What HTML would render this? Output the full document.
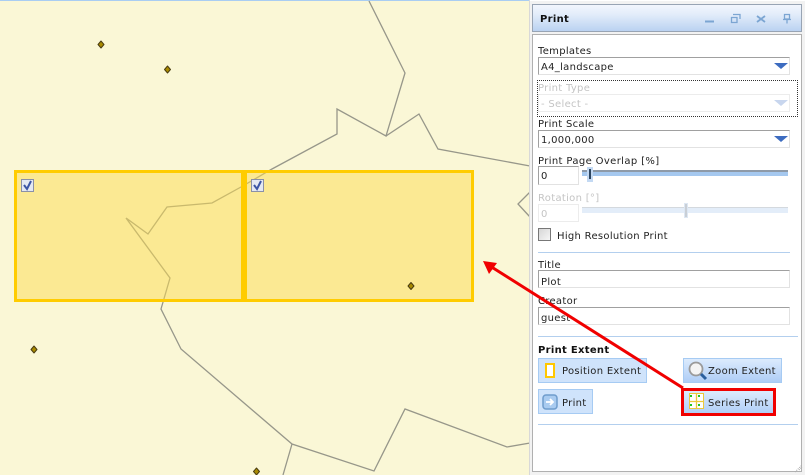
<!DOCTYPE html>
<html><head><meta charset="utf-8"><style>
html,body{margin:0;padding:0}
body{width:805px;height:475px;overflow:hidden;position:relative;background:#faf7d6;font-family:"DejaVu Sans",sans-serif;font-size:10px;color:#222}
div,span,svg{position:absolute;box-sizing:border-box}
.t{white-space:nowrap;line-height:12px;letter-spacing:.3px;margin-top:1px}
.dis{color:#c4c4c4}
.f{background:#fff;border:1px solid #e2e2e2;border-top-color:#a0a0a0;border-left-color:#a0a0a0;height:18px;padding-left:2px;line-height:20px;white-space:nowrap;letter-spacing:.3px}
.fd{border-color:#ececec;color:#c4c4c4}
.hr{height:1px;background:#b3cfee}
.b{border:1px solid #a6cbf3;background:#cfe3fb;height:25px}
.g{background:linear-gradient(#dcebfd,#aecdf6)}
</style></head><body>
<svg width="805" height="475" style="left:0;top:0">
<rect x="0" y="0" width="805" height="1" fill="#a9cdf2"/>
<g fill="none" stroke="#97978a" stroke-width="1.300">
<path d="M369 1L405 73L386 136L337 109L337 134L272 169L241 187L212 203L167 207L148 234L126 218L170 278L161 309L181 349L292 444L374 471L405 409L507 447L530 443"/>
<path d="M386 136L419 114L438 149L530 166"/>
<path d="M292 444L283 475"/>
<path d="M530 192L518 204L530 217"/>
</g>
<g fill="#fbdc50" fill-opacity=".5" stroke="none"><rect x="14" y="170" width="460" height="132"/></g>
<g fill="none" stroke="#ffcc00" stroke-width="3">
<rect x="15.500" y="171.500" width="457" height="129"/>
</g>
<rect x="241" y="170" width="6" height="132" fill="#ffcc00"/>
<g fill="#a88a00" stroke="#4a3c10" stroke-width="1" stroke-linejoin="round">
<path d="M101 41L104 44.500L101 48L98 44.500Z"/>
<path d="M167.500 66L170.500 69.500L167.500 73L164.500 69.500Z"/>
<path d="M34 346L37 349.500L34 353L31 349.500Z"/>
<path d="M256.500 468L259.500 471.500L256.500 475L253.500 471.500Z"/>
<path d="M411 282.500L414 286L411 289.500L408 286Z"/>
</g>
<g>
<rect x="21.500" y="179.500" width="12" height="12" fill="#e4e8f2" stroke="#8a90a8"/>
<path d="M24 185L27 189L31 181" fill="none" stroke="#3c55a5" stroke-width="2"/>
<rect x="251.500" y="179.500" width="12" height="12" fill="#e4e8f2" stroke="#8a90a8"/>
<path d="M254 185L257 189L261 181" fill="none" stroke="#3c55a5" stroke-width="2"/>
</g>
</svg>

<div style="left:529px;top:0;width:276px;height:475px;background:#fff;border-left:1px solid #d8d8d8"></div>
<div style="left:530px;top:1px;width:275px;height:474px;background:#f2f2f2"></div>
<div style="left:532px;top:4px;width:270px;height:28px;border:1px solid #98a4b4;background:linear-gradient(#f2f6fd,#e3edfa 35%,#bad2f1)"></div>
<div class="t" style="left:540px;top:13px;font-weight:bold;color:#111">Print</div>
<svg width="100" height="20" style="left:700px;top:9px">
<g fill="none" stroke="#7ba5d2">
<path d="M5 12.500H14" stroke-width="2"/>
<path d="M33 5.500H40V10M31.500 8.500H37V13.500H31.500Z" stroke-width="1.300"/>
<path d="M57 7L65 13M65 7L57 13" stroke-width="1.800"/>
<path d="M84.500 5.500H89.500V10H84.500ZM83 10.500H91M87 11V14.500" stroke-width="1.300"/>
</g></svg>
<div style="left:532px;top:34px;width:270px;height:438px;background:#fff;border:1px solid #b0b0b0"></div>

<div class="t" style="left:538px;top:45px">Templates</div>
<div class="f" style="left:538px;top:57px;width:252px">A4_landscape</div>
<svg width="16" height="8" style="left:773px;top:62px"><path d="M1 1H15L8 7Z" fill="#3d6cc0"/></svg>

<div style="left:537px;top:80px;width:261px;height:37px;border:1px dotted #333"></div>
<div class="t dis" style="left:538px;top:82px">Print Type</div>
<div class="f fd" style="left:538px;top:94px;width:252px">- Select -</div>
<svg width="16" height="8" style="left:773px;top:99px"><path d="M1 1H15L8 7Z" fill="#c8d6ee"/></svg>

<div class="t" style="left:538px;top:118px">Print Scale</div>
<div class="f" style="left:538px;top:130px;width:252px">1,000,000</div>
<svg width="16" height="8" style="left:773px;top:135px"><path d="M1 1H15L8 7Z" fill="#3d6cc0"/></svg>

<div class="t" style="left:538px;top:155px;letter-spacing:.37px">Print Page Overlap [%]</div>
<div class="f" style="left:538px;top:166px;width:41px;height:19px;line-height:20px;padding-left:2px">0</div>
<div style="left:582px;top:170px;width:206px;height:6px;background:#a5c8ef;border-top:2px solid #8e9aa8"></div>
<div style="left:587px;top:167px;width:6px;height:15px;background:#c3d9f3"></div>
<div style="left:589px;top:169px;width:2px;height:10px;background:#2c4560"></div>

<div class="t dis" style="left:538px;top:192px">Rotation [°]</div>
<div class="f fd" style="left:538px;top:204px;width:41px;height:18px;padding-left:2px">0</div>
<div style="left:582px;top:207px;width:206px;height:6px;background:#e3edf9;border-top:1px solid #d4d9de"></div>
<div style="left:684px;top:203px;width:4px;height:15px;background:#c9cfd6;border:1px solid #dde7f3"></div>

<div style="left:538px;top:228px;width:13px;height:13px;border:1px solid #777;background:linear-gradient(135deg,#d6d6d6,#f6f6f6)"></div>
<div class="t" style="left:557px;top:230px">High Resolution Print</div>
<div class="hr" style="left:538px;top:252px;width:252px"></div>

<div class="t" style="left:538px;top:259px">Title</div>
<div class="f" style="left:538px;top:270px;width:252px;line-height:24px">Plot</div>
<div class="t" style="left:538px;top:295px">Creator</div>
<div class="f" style="left:538px;top:307px;width:252px;line-height:22px">guest</div>
<div class="hr" style="left:538px;top:336px;width:260px"></div>
<div class="t" style="left:538px;top:344px;font-weight:bold;color:#111">Print Extent</div>

<div class="b" style="left:538px;top:358px;width:109px"></div>
<div style="left:545px;top:363px;width:10px;height:15px;border:2px solid #ffc800;background:#fff"></div>
<div class="t" style="left:562px;top:365px">Position Extent</div>

<div class="b g" style="left:683px;top:358px;width:99px"></div>
<svg width="20" height="20" style="left:688px;top:361px"><circle cx="8" cy="8" r="6.500" fill="#f4f4f4" stroke="#9a9a9a" stroke-width="1.800"/><path d="M13 13L18 18" stroke="#2a5f9e" stroke-width="3"/></svg>
<div class="t" style="left:708px;top:365px">Zoom Extent</div>

<div class="b" style="left:538px;top:389px;width:55px"></div>
<svg width="16" height="16" style="left:542px;top:394px"><rect x="1" y="1" width="14" height="14" rx="3" fill="#a9cbf0" stroke="#6f9ccc" stroke-width="1.500"/><path d="M4 8H11M8 5L11 8L8 11" fill="none" stroke="#fff" stroke-width="1.800"/></svg>
<div class="t" style="left:562px;top:397px">Print</div>

<div class="b g" style="left:683px;top:390px;width:91px;height:25px"></div>
<svg width="16" height="17" style="left:689px;top:393px"><rect x="0.500" y="0.500" width="14" height="15" fill="#fff" stroke="#ecc83c"/><path d="M7.500 0V16M0 8.500H15" stroke="#ecc83c" stroke-width="1.300"/><g fill="#22c422"><rect x="1" y="2" width="2" height="2"/><rect x="9" y="2" width="2" height="2"/><rect x="1" y="11" width="2" height="2"/><rect x="9" y="11" width="2" height="2"/></g></svg>
<div class="t" style="left:708px;top:397px">Series Print</div>
<div class="hr" style="left:538px;top:424px;width:260px"></div>

<svg width="805" height="475" style="left:0;top:0">
<rect x="682.500" y="389.500" width="92" height="25" fill="none" stroke="#f00000" stroke-width="3"/>
<path d="M683 388L490 266" stroke="#f00000" stroke-width="3" fill="none"/>
<path d="M483 261L497 263L489 274Z" fill="#f00000"/>
<path d="M799 470L802 467M795 472L802 465" stroke="#aaa" stroke-width="1" stroke-dasharray="1 1" fill="none"/>
</svg>
</body></html>
